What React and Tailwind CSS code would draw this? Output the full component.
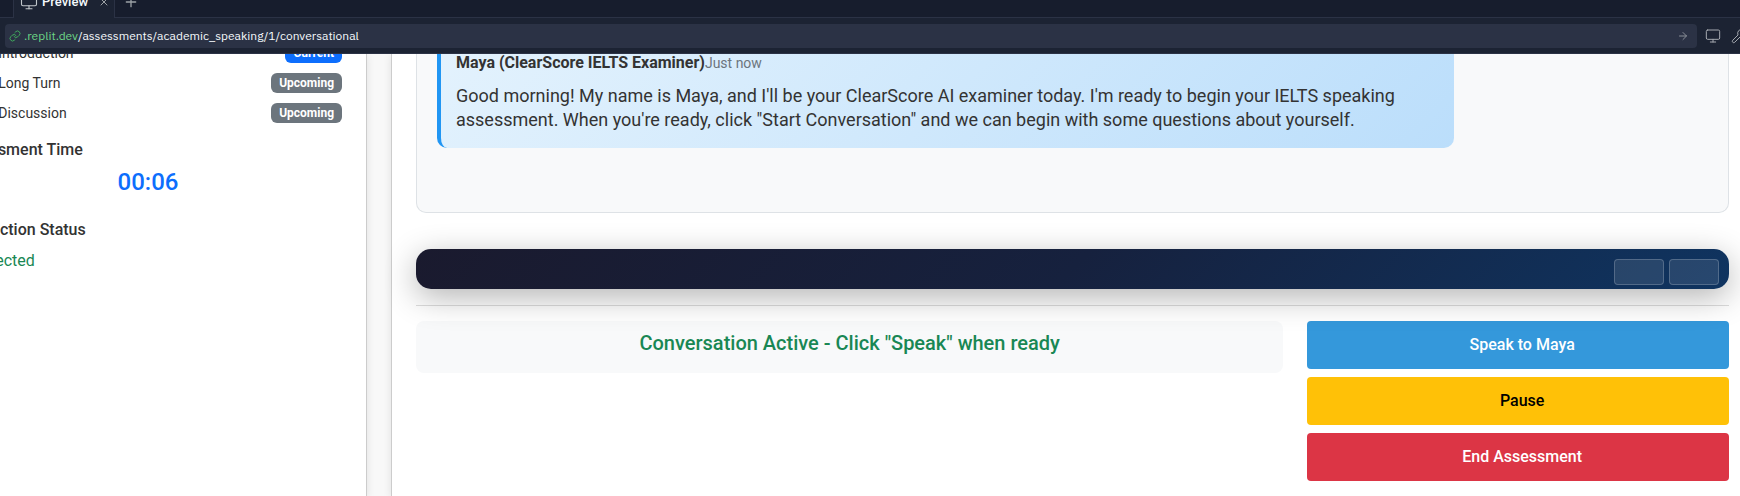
import { ArrowRight, Link, Monitor, Plus, Wrench, X } from "lucide-react";

function BrowserChrome() {
  return (
    <header className="relative z-10 border-b border-[#2b3245] bg-[#1c2333] font-[Roboto,sans-serif]">
      <div className="h-[18px] overflow-hidden bg-[#171d2d]">
        <div className="-mt-3.5 flex h-8">
          <div className="w-3.5 border-r border-b border-[#2b3245]" />
          <div className="flex w-[100px] items-center bg-[#1c2333] pl-1.5 text-[#f5f9fc]">
            <Monitor size={18} strokeWidth={1.5} className="shrink-0 text-[#c2c8cc]" />
            <span className="ml-1 w-[56px] text-[13px] leading-5 font-medium">Preview</span>
            <button aria-label="Close tab" className="text-[#9da2a6]">
              <X size={12} strokeWidth={2} />
            </button>
          </div>
          <div className="flex flex-1 items-center border-b border-l border-[#2b3245] pl-2">
            <button aria-label="New tab" className="text-[#9da2a6]">
              <Plus size={16} strokeWidth={2} />
            </button>
          </div>
        </div>
      </div>
      <div className="flex h-[35px] items-center pl-[5px]">
        <div className="flex h-6 flex-1 items-center rounded bg-[#2b3245] pr-2 pl-1">
          <Link size={12} strokeWidth={2} className="mr-[3px] shrink-0 text-[#3fa85c]" />
          <a href="#address" className="flex-1 font-['IBM_Plex_Sans',Inter,sans-serif] text-xs leading-4 text-[#f5f9fc]">
            <span className="text-[#6bd585]">.replit.dev</span>/assessments/academic_speaking/1/conversational
          </a>
          <button aria-label="Go" className="text-[#8a8f98]">
            <ArrowRight size={12} strokeWidth={2} />
          </button>
        </div>
        <div className="flex w-[43px] shrink-0 gap-2.5 overflow-hidden pl-2 text-[#a5a9b0]">
          <button aria-label="Device size" className="shrink-0">
            <Monitor size={16} strokeWidth={1.5} />
          </button>
          <button aria-label="Developer tools" className="shrink-0">
            <Wrench size={16} strokeWidth={1.5} />
          </button>
        </div>
      </div>
    </header>
  );
}

function PartRow({ name, status, current }) {
  return (
    <li className="flex items-center justify-between">
      <span className="text-sm leading-5">{name}</span>
      <span
        className={
          current
            ? "rounded-md bg-[#0d6efd] px-2 py-1 text-xs leading-3 font-bold text-white"
            : "rounded-md bg-[#6c757d] px-2 py-1 text-xs leading-3 font-bold text-white"
        }
      >
        {status}
      </span>
    </li>
  );
}

function Sidebar() {
  return (
    <aside className="-ml-[70px] w-[437px] shrink-0 border-r border-[#ccc] bg-white px-6 shadow-[0_2px_8px_rgba(0,0,0,0.1)]">
      <ul className="-mt-[11px] flex flex-col gap-2.5">
        <PartRow name="Part 1: Introduction" status="Current" current />
        <PartRow name="Part 2: Long Turn" status="Upcoming" />
        <PartRow name="Part 3: Discussion" status="Upcoming" />
      </ul>
      <h2 className="mt-[17px] text-base leading-5 font-medium">Assessment Time</h2>
      <p className="mt-1.5 text-center text-2xl leading-8 font-medium text-[#0d6efd]">00:06</p>
      <h2 className="mt-[22px] text-base leading-5 font-medium">Connection Status</h2>
      <p className="mt-[9px] pl-1 text-base leading-6 text-[#198754]">Connected</p>
    </aside>
  );
}

function Conversation() {
  return (
    <section className="-mt-px rounded-b-[10px] border border-t-0 border-[#dee2e6] bg-[#f8f9fa] px-5 pb-16">
      <article className="w-4/5 rounded-b-[10px] border-l-4 border-[#2196f3] bg-linear-[135deg,#e3f2fd,#bbdefb] px-[15px] pb-4">
        <div className="flex items-center pb-[11px]">
          <strong className="text-base leading-5 font-bold">Maya (ClearScore IELTS Examiner)</strong>
          <small className="text-sm leading-5 text-[#6c757d]">Just now</small>
        </div>
        <p className="text-lg leading-6">
          Good morning! My name is Maya, and I'll be your ClearScore AI examiner today. I'm ready to begin your IELTS
          speaking assessment. When you're ready, click "Start Conversation" and we can begin with some questions about
          yourself.
        </p>
      </article>
    </section>
  );
}

function VideoBar() {
  const control = "h-[26px] w-[50px] rounded border border-white/20 bg-white/10";
  return (
    <div className="relative mt-9 flex h-10 justify-end gap-[5px] rounded-[15px] bg-linear-[135deg,#1a1a2e_0%,#16213e_50%,#0f3460_100%] px-2.5 pt-2.5 shadow-[0_8px_32px_rgba(0,0,0,0.3)]">
      <button aria-label="Toggle captions" className={control} />
      <button aria-label="Toggle full screen" className={control} />
    </div>
  );
}

function Controls() {
  const button = "h-12 rounded pl-2 text-base leading-6 font-medium";
  return (
    <div className="-mx-3 mt-[15px] grid grid-cols-3">
      <div className="col-span-2 px-3">
        <div className="h-[52px] rounded-lg bg-[#f8f9fa] pt-2.5 text-center">
          <p className="text-xl leading-6 font-medium text-[#198754]">Conversation Active - Click "Speak" when ready</p>
        </div>
      </div>
      <div className="flex flex-col gap-2 px-3">
        <button className={`${button} bg-[#3498db] text-white`}>Speak to Maya</button>
        <button className={`${button} bg-[#ffc107] text-black`}>Pause</button>
        <button className={`${button} bg-[#dc3545] text-white`}>End Assessment</button>
      </div>
    </div>
  );
}

export default function App() {
  return (
    <div className="flex h-screen flex-col overflow-hidden bg-[#f8f8f8] font-[Roboto,sans-serif] text-[#333]">
      <BrowserChrome />
      <div className="flex min-h-0 flex-1 gap-6 overflow-hidden">
        <Sidebar />
        <main className="min-w-0 flex-1 border-l border-[#ccc] bg-white pr-[11px] pl-6 shadow-[0_2px_8px_rgba(0,0,0,0.1)]">
          <Conversation />
          <VideoBar />
          <hr className="mt-4 border-[#ddd]" />
          <Controls />
        </main>
      </div>
    </div>
  );
}
